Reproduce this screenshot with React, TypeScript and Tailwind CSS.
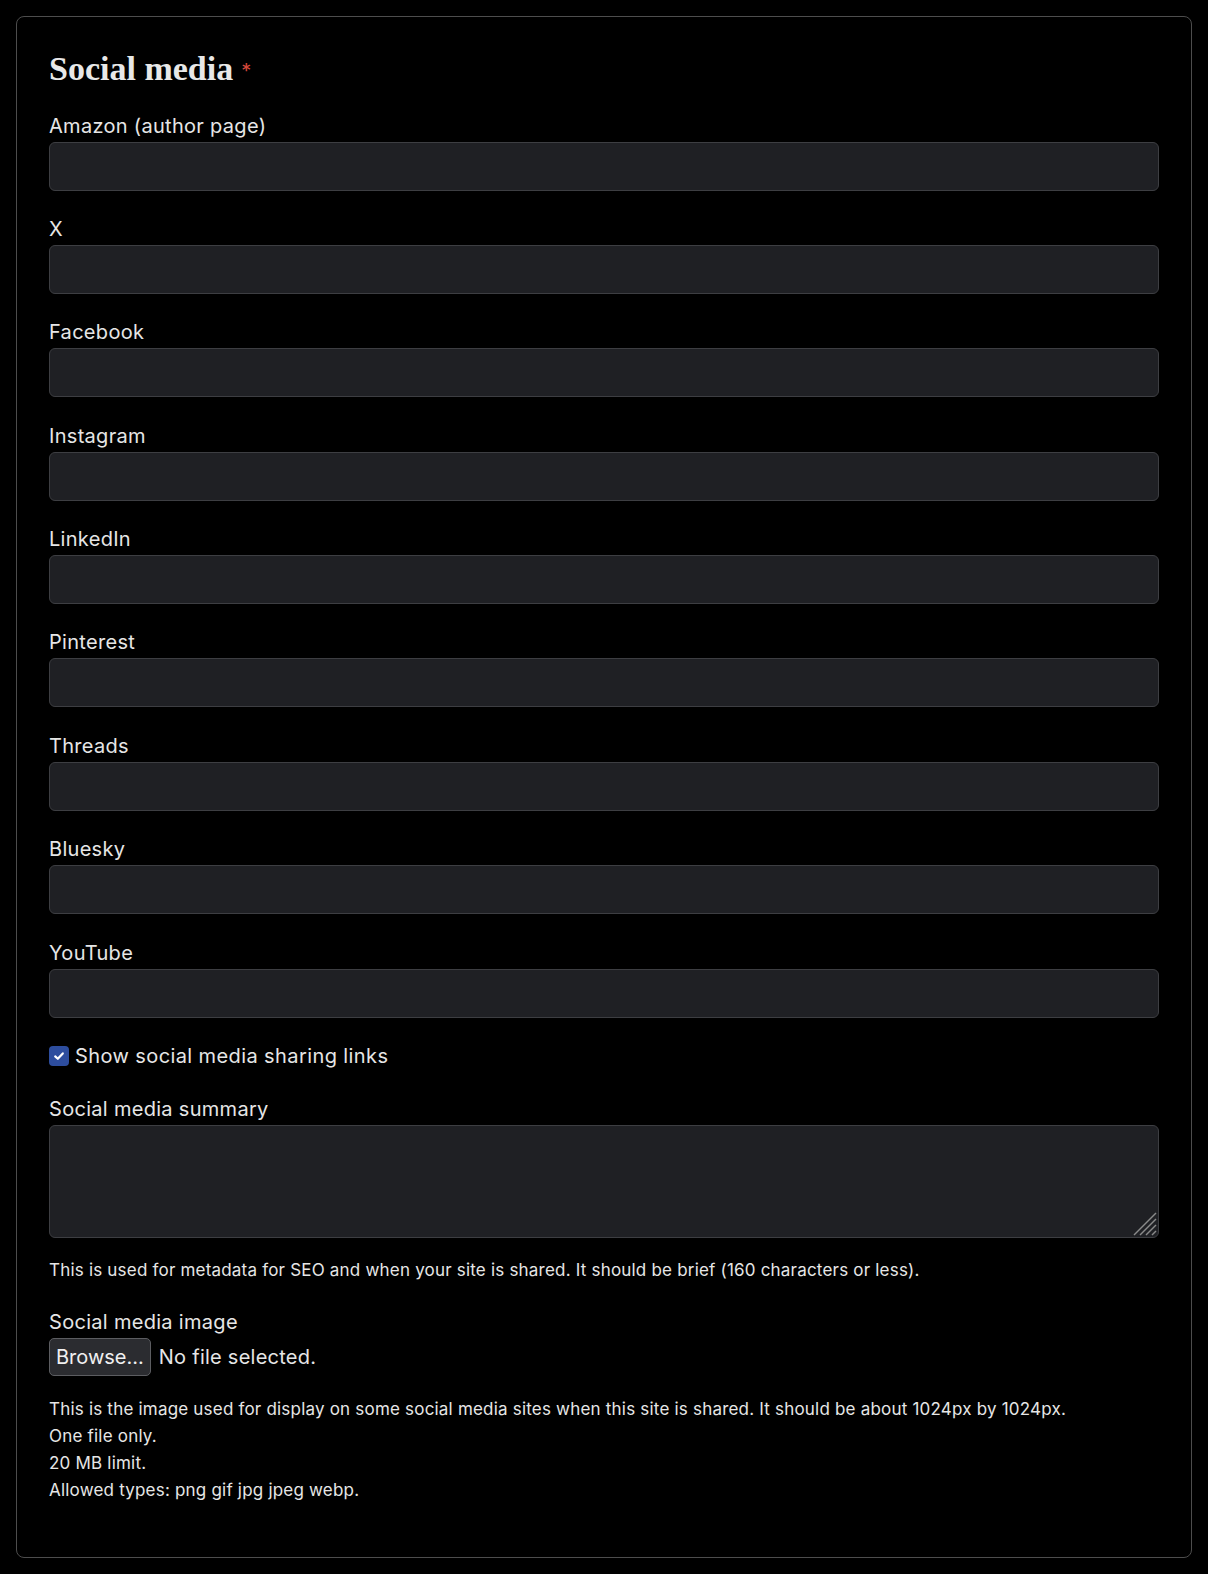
import React from 'react';

const fields = ['Amazon (author page)', 'X', 'Facebook', 'Instagram', 'LinkedIn', 'Pinterest', 'Threads', 'Bluesky', 'YouTube'];

const sans = "font-['Inter','Liberation_Sans',sans-serif]";

const TextField: React.FC<{ label: string }> = ({ label }) => (
    <div className="mb-[23.4px]">
        <label className="block text-[20px] leading-[30px] tracking-[0.3px] text-[#e6e6e6] mb-[1px]">{label}</label>
        <input type="text" className="block w-full h-[49px] bg-[#1f2024] border border-[#3d3e42] rounded-[6px] px-3 text-[20px] text-[#e6e6e6] outline-none" />
    </div>
);

const ResizeGrip: React.FC = () => (
    <svg className="absolute right-[2px] bottom-[2px] pointer-events-none" width="26" height="26" viewBox="0 0 26 26">
        <g stroke="#8a8a8a" strokeWidth="1.5">
            <line x1="25" y1="3" x2="3" y2="25" />
            <line x1="25" y1="9" x2="9" y2="25" />
            <line x1="25" y1="15" x2="15" y2="25" />
            <line x1="25" y1="21" x2="21" y2="25" />
        </g>
    </svg>
);

export default function App() {
    return (
        <div className={`min-h-screen bg-black p-4 ${sans}`}>
            <div className="border border-[#4d4d4d] rounded-[8px] px-8 pt-8 pb-[54px]">
                <h2 className="text-[34px] leading-[40px] font-bold text-[#e8e8e8] font-['Liberation_Serif',serif] mb-[21.5px] flex items-start">
                    Social media
                    <span className="text-[#d4483b] text-[20px] leading-[20px] ml-[8px] mt-[12px] font-normal font-['Inter',sans-serif]">*</span>
                </h2>
                {fields.map(f => <TextField key={f} label={f} />)}

                <div className="flex items-center h-[30px] mb-[23.2px]">
                    <span className="w-[20px] h-[20px] rounded-[4px] bg-[#2d4d9e] flex items-center justify-center mr-[6px]">
                        <svg width="12" height="12" viewBox="0 0 12 12">
                            <path d="M2.2 6.4 L4.8 8.8 L9.8 3.4" fill="none" stroke="#ffffff" strokeWidth="2.2" strokeLinecap="round" strokeLinejoin="round" />
                        </svg>
                    </span>
                    <span className="text-[20px] leading-[30px] tracking-[0.4px] text-[#e6e6e6]">Show social media sharing links</span>
                </div>

                <div className="mb-[23.5px]">
                    <label className="block text-[20px] leading-[30px] tracking-[0.3px] text-[#e6e6e6] mb-[1px]">Social media summary</label>
                    <div className="relative">
                        <textarea className="block w-full h-[113px] bg-[#1f2024] border border-[#3d3e42] rounded-[6px] px-3 py-2 text-[20px] text-[#e6e6e6] outline-none resize-none" />
                        <ResizeGrip />
                    </div>
                    <p className="mt-[19px] text-[17px] leading-[26.7px] tracking-[0.2px] text-[#e6e6e6]">This is used for metadata for SEO and when your site is shared. It should be brief (160 characters or less).</p>
                </div>

                <div>
                    <label className="block text-[20px] leading-[30px] tracking-[0.3px] text-[#e6e6e6] mb-[1px]">Social media image</label>
                    <div className="flex items-center">
                        <button className="h-[38px] px-[6px] bg-[#2b2c30] border border-[#5c5d61] rounded-[5px] text-[20px] text-[#f0f0f0]">Browse...</button>
                        <span className="ml-[8px] text-[20px] tracking-[0.25px] text-[#e6e6e6]">No file selected.</span>
                    </div>
                    <div className="mt-[20px] text-[17px] leading-[26.7px] tracking-[0.2px] text-[#e6e6e6]">
                        <p>This is the image used for display on some social media sites when this site is shared. It should be about 1024px by 1024px.</p>
                        <p>One file only.</p>
                        <p>20 MB limit.</p>
                        <p>Allowed types: png gif jpg jpeg webp.</p>
                    </div>
                </div>
            </div>
        </div>
    );
}
